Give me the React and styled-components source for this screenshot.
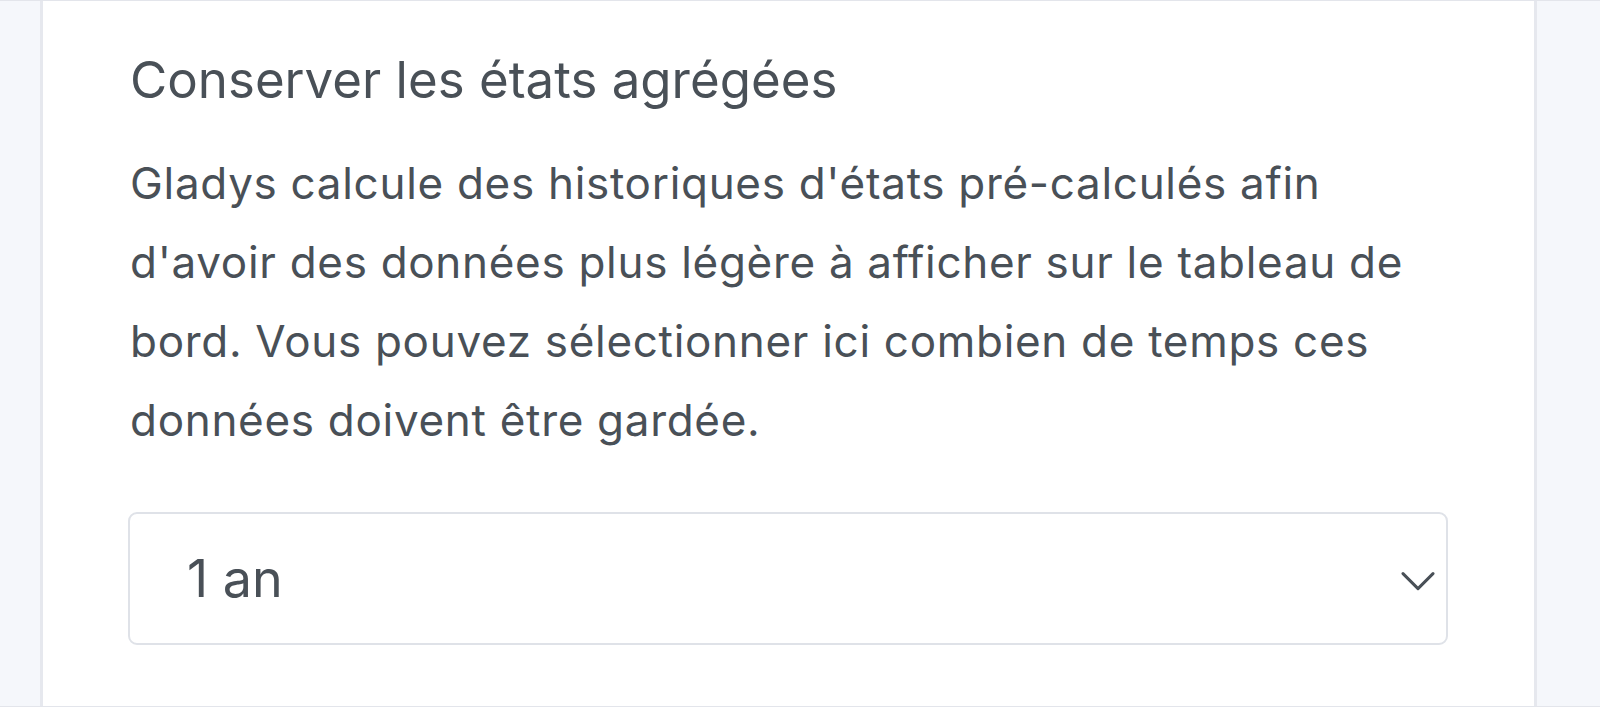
import React from "react";
import styled, { createGlobalStyle } from "styled-components";

const GlobalStyle = createGlobalStyle`
  html, body {
    margin: 0;
    padding: 0;
    background: #f5f7fb;
  }
  * {
    box-sizing: border-box;
  }
`;

const Page = styled.div`
  height: 707px;
  display: flex;
  border-top: 1px solid #e3e5eb;
  border-bottom: 1px solid #e3e5eb;
  background: #f5f7fb;
  font-family: Inter, "Noto Sans", sans-serif;
  color: #495057;
  overflow: hidden;
`;

const Card = styled.section`
  margin-left: 40px;
  width: 1497px;
  background: #ffffff;
  border-left: 3px solid #e6e8ee;
  border-right: 3px solid #e6e8ee;
  padding: 48px 86px 0 85px;
`;

const Title = styled.h3`
  margin: 0;
  font-size: 51px;
  font-weight: 400;
  line-height: normal;
  color: #495057;
  padding-left: 2px;
`;

const Description = styled.p`
  margin: 34px 0 0;
  font-size: 44px;
  line-height: 79px;
  letter-spacing: 0.7px;
  padding-left: 2px;
`;

const SelectWrap = styled.div`
  position: relative;
  margin-top: 52px;
`;

const Select = styled.select`
  appearance: none;
  -webkit-appearance: none;
  width: 100%;
  height: 133px;
  padding: 0 80px 0 57px;
  border: 2px solid #dfe2e8;
  border-radius: 9px;
  background: #ffffff;
  font-family: Inter, "Noto Sans", sans-serif;
  font-size: 52px;
  color: #495057;
  outline: none;
`;

const Chevron = styled.svg`
  position: absolute;
  right: 13px;
  top: 50%;
  transform: translateY(-40%);
  width: 34px;
  height: 21px;
  pointer-events: none;
`;

export default function App() {
  return (
    <>
      <GlobalStyle />
      <Page>
        <Card>
          <Title>Conserver les états agrégées</Title>
          <Description>
            Gladys calcule des historiques d'états pré-calculés afin d'avoir
            des données plus légère à afficher sur le tableau de bord. Vous
            pouvez sélectionner ici combien de temps ces données doivent être
            gardée.
          </Description>
          <SelectWrap>
            <Select defaultValue="1y">
              <option value="1m">1 mois</option>
              <option value="3m">3 mois</option>
              <option value="6m">6 mois</option>
              <option value="1y">1 an</option>
              <option value="2y">2 ans</option>
            </Select>
            <Chevron viewBox="0 0 34 21" fill="none">
              <path
                d="M2 3 L17 18 L32 3"
                stroke="#495057"
                strokeWidth="3"
                strokeLinecap="round"
                strokeLinejoin="round"
              />
            </Chevron>
          </SelectWrap>
        </Card>
      </Page>
    </>
  );
}
